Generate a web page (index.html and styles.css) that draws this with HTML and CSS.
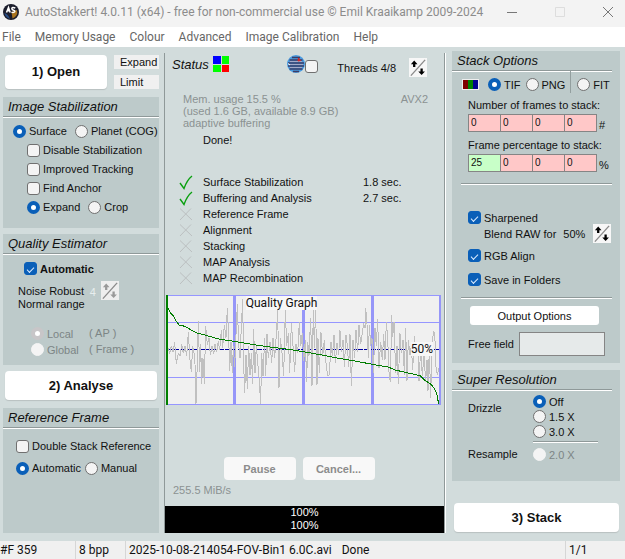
FILE: index.html
```html
<!DOCTYPE html>
<html lang="en">
<head>
<meta charset="utf-8">
<title>AutoStakkert! 4.0.11 (x64)</title>
<link rel="stylesheet" href="styles.css">
</head>
<body>
<svg class="defs" aria-hidden="true">
  <symbol id="updown" viewBox="0 0 18 20">
    <path d="M1.5 18.5L16.5 2" stroke="#8a8a8a" stroke-width="1.4" fill="none"/>
    <path d="M5 2.500L8.500 6.500H6.200V9.500H3.800V6.500H1.500ZM12.800 18L16.300 14.200H14V11H11.600V14.200H9.300Z" fill="currentColor"/>
  </symbol>
  <symbol id="tick" viewBox="0 0 14 15"><path d="M1 8L5 13.500Q8 5 13 1" fill="none" stroke="#0aa010" stroke-width="1.4"/></symbol>
  <symbol id="cross" viewBox="0 0 14 15"><path d="M1 1.500L13 13M12 1.500L1 13" fill="none" stroke="#bcc0c1" stroke-width="1"/></symbol>
</svg>

<header class="titlebar">
  <svg class="app-icon" viewBox="0 0 16 16" aria-hidden="true">
    <circle cx="8" cy="8" r="8" fill="#1b1d2c"/>
    <path d="M8.500 8L14 6Q15.500 12 9.500 14.500Z" fill="#a9741f"/>
    <path d="M1.500 9Q5 10 7 15Q2 13 1.500 9Z" fill="#274d86"/>
    <path d="M3.500 8.500L5.500 3.500L7.200 8.500M4.300 6.800H6.800M12.300 4Q9 2.600 8.800 4.700Q9 6 10.500 6.200Q12.500 6.800 11.500 8Q10 9 8.500 8" fill="none" stroke="#fff" stroke-width="1.500"/>
  </svg>
  <h1 class="title">AutoStakkert! 4.0.11 (x64) - free for non-commercial use © Emil Kraaikamp 2009-2024</h1>
  <div class="window-buttons">
    <button type="button" aria-label="Minimize"><svg viewBox="0 0 10 10"><path d="M0 5.500H10"/></svg></button>
    <button type="button" aria-label="Maximize" disabled><svg viewBox="0 0 10 10"><path d="M.5 .5H9.500V9.500H.5Z"/></svg></button>
    <button type="button" aria-label="Close"><svg viewBox="0 0 10 10"><path d="M0 0L10 10M10 0L0 10"/></svg></button>
  </div>
</header>

<nav class="menu">
  <a href="#">File</a><a href="#">Memory Usage</a><a href="#">Colour</a><a href="#">Advanced</a><a href="#">Image Calibration</a><a href="#">Help</a>
</nav>

<main class="main">
  <div class="side left">
    <div class="open-row">
      <button class="big" type="button">1) Open</button>
      <div class="mini-stack">
        <button class="mini" type="button">Expand</button>
        <button class="mini" type="button">Limit</button>
      </div>
    </div>

    <section class="group stabilization">
      <h2>Image Stabilization</h2>
      <div class="rows">
        <div class="row">
          <label><input type="radio" name="target" checked>Surface</label>
          <label><input type="radio" name="target">Planet (COG)</label>
        </div>
        <div class="row inset"><label><input type="checkbox">Disable Stabilization</label></div>
        <div class="row inset"><label><input type="checkbox">Improved Tracking</label></div>
        <div class="row inset"><label><input type="checkbox">Find Anchor</label></div>
        <div class="row inset">
          <label><input type="radio" name="area" checked>Expand</label>
          <label><input type="radio" name="area">Crop</label>
        </div>
      </div>
    </section>

    <section class="group quality">
      <h2>Quality Estimator</h2>
      <label class="auto"><input type="checkbox" checked>Automatic</label>
      <div class="noise">
        <p>Noise Robust<br>Normal range</p>
        <span class="faint">4</span>
        <button class="spin" type="button" aria-label="Noise level" disabled><svg><use href="#updown"/></svg></button>
      </div>
      <div class="scope">
        <label class="off"><input type="radio" name="scope" checked disabled>Local</label><span>( AP )</span>
        <label class="off"><input type="radio" name="scope" disabled>Global</label><span>( Frame )</span>
      </div>
    </section>

    <button class="big analyse" type="button">2) Analyse</button>

    <section class="group reference">
      <h2>Reference Frame</h2>
      <div class="rows">
        <div class="row"><label><input type="checkbox">Double Stack Reference</label></div>
        <div class="row tight">
          <label><input type="radio" name="ref" checked>Automatic</label>
          <label><input type="radio" name="ref">Manual</label>
        </div>
      </div>
    </section>
  </div>

  <section class="center">
    <div class="status-head">
      <h2>Status</h2>
      <svg class="bayer" viewBox="0 0 16 16" aria-hidden="true"><path fill="#00f" d="M0 0H8V8H0Z"/><path fill="#0f0" d="M9 0H16V8H9ZM0 9H8V16H0Z"/><path fill="#f00" d="M9 9H16V16H9Z"/></svg>
      <div class="planet">
        <svg viewBox="0 0 18 18" aria-hidden="true">
          <circle cx="9" cy="9" r="9" fill="#4a9be0"/>
          <path d="M5 2.500H13M2.500 5H15.500M1 8H17M1 11H17M2.500 14H15.500M6 16.500H12" stroke="#3b3c66" stroke-width="1.500"/>
          <path d="M3 6.500H15M2 9.500H16M3 12.500H15" stroke="#a3a9c8" stroke-width="1"/>
          <path d="M11.500 3L13.500 5.500L11 6Z" fill="#d22" stroke="#d22"/><path d="M1 8.500L3 10" stroke="#fff"/>
        </svg>
        <input type="checkbox" aria-label="Planet view">
      </div>
      <span class="threads">Threads 4/8</span>
      <button class="spin" type="button" aria-label="Thread count"><svg><use href="#updown"/></svg></button>
    </div>
    <div class="memory">
      <p>Mem. usage 15.5 %<br>(used 1.6 GB, available 8.9 GB)<br>adaptive buffering</p>
      <span>AVX2</span>
    </div>
    <p class="done">Done!</p>
    <ul class="steps">
      <li><svg><use href="#tick"/></svg><span>Surface Stabilization</span><span>1.8 sec.</span></li>
      <li><svg><use href="#tick"/></svg><span>Buffering and Analysis</span><span>2.7 sec.</span></li>
      <li><svg><use href="#cross"/></svg><span>Reference Frame</span></li>
      <li><svg><use href="#cross"/></svg><span>Alignment</span></li>
      <li><svg><use href="#cross"/></svg><span>Stacking</span></li>
      <li><svg><use href="#cross"/></svg><span>MAP Analysis</span></li>
      <li><svg><use href="#cross"/></svg><span>MAP Recombination</span></li>
    </ul>
    <figure class="graph">
      <svg viewBox="18 30 825 330" shape-rendering="crispEdges" role="img" aria-label="Quality graph">
        <path fill="#f0f0f0" d="M18 30H843V360H18Z"/>
        <path stroke="#9696ff" stroke-width="3" d="M18 31.500H843M18 112.500H843M18 277.500H843M18 358.500H843"/>
        <path stroke="#9696f8" stroke-width="9" d="M223.500 30V360M430.500 30V360M637.500 30V360"/><path stroke="#9696f8" stroke-width="6" d="M840 30V360"/>
        <path stroke="#0000a0" stroke-width="3" stroke-dasharray="15 4" d="M24 193.500H837"/>
        <polyline fill="none" stroke="#c0c0c0" stroke-width="3" points="24,190 29,205 34,182 39,200 44,172 49,236 55,205 60,214 65,178 70,205 75,184 80,212 85,142 90,225 94,262 98,184 102,205 105,238 108,357 111,262 115,108 119,260 122,178 125,296 129,220 133,296 137,124 142,180 147,160 151,210 156,184 161,208 165,178 170,202 175,168 179,196 184,134 188,190 193,120 198,158 202,70 206,150 209,258 213,170 217,265 220,184 224,245 228,150 232,58 236,180 240,220 244,125 248,42 251,235 254,325 258,210 262,312 266,182 270,270 274,205 278,296 281,132 285,265 289,180 293,232 297,275 302,357 305,205 309,274 314,160 317,272 321,146 325,220 330,170 335,235 339,160 344,220 349,150 353,74 357,308 361,160 366,205 371,272 376,74 380,182 385,145 389,265 394,115 399,182 404,262 408,178 413,204 418,112 422,184 427,144 431,228 436,165 440,290 443,170 447,212 452,98 456,302 460,74 463,188 467,68 471,300 474,160 478,265 483,142 488,212 493,166 498,235 503,272 508,270 513,172 517,214 522,150 526,235 531,174 536,210 540,136 544,202 549,164 553,246 558,150 562,182 566,245 570,148 574,302 579,165 584,220 588,135 593,200 597,120 602,178 606,150 611,115 615,130 617,70 621,118 625,220 628,120 632,182 636,160 640,265 645,130 649,182 653,102 657,250 662,170 667,225 671,148 675,225 679,112 683,160 687,260 691,292 695,90 698,156 702,110 707,265 711,182 715,298 720,145 724,205 729,165 733,270 737,130 741,288 745,164 750,210 754,184 758,255 763,154 768,205 773,184 777,288 782,192 787,272 792,210 797,290 801,225 804,318 808,190 812,340 815,210 820,140 824,142 828,245 832,270 837,250"/>
        <polyline fill="none" stroke="#007d00" stroke-width="3" points="22,65 32,84 40,92 48,108 57,120 75,124 92,134 112,144 145,153 180,163 222,169 275,178 330,186 385,193 430,200 480,209 530,219 580,227 637,238 685,246 705,255 745,264 780,272 795,286 812,297 824,312 830,325 836,357"/>
        <path stroke="#008000" stroke-width="6" d="M21 30V360"/>
      </svg>
      <figcaption>Quality Graph</figcaption>
      <span class="percent">50%</span>
    </figure>
    <div class="controls">
      <button type="button" disabled>Pause</button>
      <button type="button" disabled>Cancel...</button>
    </div>
    <p class="speed">255.5 MiB/s</p>
    <div class="progress"><span>100%</span><span>100%</span></div>
  </section>

  <div class="side right">
    <section class="group stack">
      <h2>Stack Options</h2>
      <div class="formats">
        <svg class="rgb" viewBox="0 0 17 11" aria-hidden="true"><path fill="#eee" d="M0 0H17V11H0Z"/><path fill="#800000" d="M1 1H6V10H1Z"/><path fill="#008000" d="M6 1H11V10H6Z"/><path fill="#000090" d="M11 1H16V10H11Z"/></svg>
        <label><input type="radio" name="format" checked>TIF</label>
        <label><input type="radio" name="format">PNG</label>
        <label class="fit"><input type="radio" name="format">FIT</label>
      </div>
      <fieldset class="amount">
        <legend>Number of frames to stack:</legend>
        <div class="cells">
          <input type="text" value="0" aria-label="Frames 1"><input type="text" value="0" aria-label="Frames 2"><input type="text" value="0" aria-label="Frames 3"><input type="text" value="0" aria-label="Frames 4"><span>#</span>
        </div>
      </fieldset>
      <fieldset class="amount">
        <legend>Frame percentage to stack:</legend>
        <div class="cells">
          <input class="active" type="text" value="25" aria-label="Percentage 1"><input type="text" value="0" aria-label="Percentage 2"><input type="text" value="0" aria-label="Percentage 3"><input type="text" value="0" aria-label="Percentage 4"><span>%</span>
        </div>
      </fieldset>
      <hr>
      <div class="options">
        <label><input type="checkbox" checked>Sharpened</label>
        <div class="blend"><span>Blend RAW for</span><span>50%</span>
          <button class="spin" type="button" aria-label="Blend amount"><svg><use href="#updown"/></svg></button>
        </div>
        <label class="rgb-align"><input type="checkbox" checked>RGB Align</label>
        <label><input type="checkbox" checked>Save in Folders</label>
      </div>
      <hr>
      <button class="output" type="button">Output Options</button>
      <div class="free"><label for="free">Free field</label><input id="free" type="text"></div>
    </section>

    <section class="group super">
      <h2>Super Resolution</h2>
      <div class="drizzle">
        <span class="name">Drizzle</span>
        <div class="choices">
          <label><input type="radio" name="drizzle" checked>Off</label>
          <label><input type="radio" name="drizzle">1.5 X</label>
          <label><input type="radio" name="drizzle">3.0 X</label>
        </div>
        <hr>
        <span>Resample</span>
        <label class="off"><input type="radio" name="resample" disabled>2.0 X</label>
      </div>
    </section>

    <button class="big stack-button" type="button">3) Stack</button>
  </div>
</main>

<footer class="statusbar">
  <span class="frames">#F 359</span><span class="depth">8 bpp</span>
  <span class="file"><span>2025-10-08-214054-FOV-Bin1 6.0C.avi</span><span>Done</span></span>
  <span class="page">1/1</span>
</footer>
</body>
</html>
```

FILE: styles.css
```css
* { box-sizing: border-box; }

body {
  margin: 0;
  min-height: 100vh;
  display: flex;
  flex-direction: column;
  background: #d2dcdc;
  color: #111;
  font: 11px/12px "Liberation Sans", Arial, sans-serif;
}

.defs { position: absolute; width: 0; height: 0; }
h1, h2, p, ul, figure, fieldset { margin: 0; padding: 0; }
button, input { font: inherit; color: inherit; margin: 0; padding: 0; }
button { border: 0; }
svg { display: block; }

/* Title bar and menu */
.titlebar {
  display: flex;
  align-items: center;
  height: 27px;
  padding: 0 12px 4px 3px;
  background: #f3f3f3;
  color: #8c8c8c;
}
.app-icon { width: 16px; height: 16px; flex: none; }
.title {
  flex: 1;
  margin-left: 6px;
  font: 12px/16px Roboto, sans-serif;
  white-space: nowrap;
}
.window-buttons { display: flex; gap: 38px; }
.window-buttons button { width: 10px; height: 10px; background: none; }
.window-buttons svg { width: 10px; height: 10px; fill: none; stroke: #777; }
.window-buttons button:disabled svg { stroke: #ddd; }
.menu {
  display: flex;
  gap: 14px;
  height: 20px;
  padding-left: 2px;
  background: #fff;
  font: 12px/20px Roboto, sans-serif;
}
.menu a { color: #666; text-decoration: none; white-space: nowrap; }

/* Shared parts */
.main {
  flex: 1;
  display: grid;
  grid-template-columns: 156px minmax(0, 1fr) 168px;
  padding: 4px 5px 8px 3px;
}
.side { display: flex; flex-direction: column; }
.group { background: #bdcaca; }
h2 { font: italic 13px/19px "Liberation Sans", Arial, sans-serif; }
.group h2 {
  padding-left: 5px;
  border-bottom: 1px solid #8f9999;
  box-shadow: 0 1px #fff;
}
label { display: flex; align-items: center; gap: 3px; white-space: nowrap; }
input[type="radio"], input[type="checkbox"] {
  appearance: none;
  flex: none;
  width: 13px;
  height: 13px;
  border: 1px solid #707070;
  border-radius: 3px;
  background: #f4f4f4;
}
input[type="radio"] { border-radius: 50%; }
input[type="radio"]:checked { border: 4px solid #0a5fb8; background: #fff; }
input[type="checkbox"]:checked {
  border-color: #0a5fb8;
  background: #0a5fb8;
  display: grid;
  place-items: center;
}
input[type="checkbox"]:checked::before {
  content: "";
  width: 6px;
  height: 3px;
  border: solid #dcecff;
  border-width: 0 0 1px 1px;
  rotate: -45deg;
}
input[type="radio"]:disabled { border-color: #f4f4f4; }
input[type="radio"]:checked:disabled { border-color: #c8c6c8; }
.off { color: #7c8585; }
.big {
  border-radius: 4px;
  background: #fff;
  box-shadow: 0 1px 1px #b8c0c0;
  font-weight: bold;
  font-size: 13px;
}
.spin { flex: none; width: 18px; height: 19px; background: #f7f7f7; color: #000; }
.spin svg { width: 18px; height: 19px; }
.spin:disabled { color: #999; background: #eee; }
hr { height: 2px; margin: 0; border: solid; border-width: 1px 0; border-color: #8f9999 #fff #fff; }
.row { display: flex; gap: 8px; height: 16px; }

/* Left column */
.open-row { display: flex; justify-content: space-between; padding: 4px 0 0 2px; }
.open-row .big { width: 102px; height: 34px; }
.mini-stack { display: grid; gap: 6px; }
.mini { width: 45px; height: 14px; padding-left: 6px; background: #f0f0f0; text-align: left; white-space: nowrap; }
.stabilization { margin-top: 8px; height: 131px; }
.rows { display: grid; gap: 3px; padding: 6px 0 0 10px; }
.inset { padding-left: 14px; }
.quality { margin-top: 6px; height: 131px; }
.auto { padding: 8px 0 0 21px; font-weight: bold; }
.noise { display: flex; gap: 5px; padding: 6px 0 0 15px; }
.noise p { line-height: 13px; padding-top: 4px; white-space: nowrap; }
.faint { padding-top: 5px; color: #e8eeee; }
.scope {
  display: grid;
  grid-template-columns: 58px 1fr;
  row-gap: 3px;
  padding: 16px 0 0 28px;
  color: #7c8585;
}
.analyse { margin: 6px 2px 0; height: 29px; }
.reference { flex: 1; margin-top: 8px; }
.reference .rows { align-content: start; padding: 10px 0 0 13px; gap: 6px; }
.reference .tight { gap: 4px; }

/* Center column */
.center {
  display: flex;
  flex-direction: column;
  margin: 2px 7px 0 5px;
  border: solid #8f9999;
  border-width: 0 1px;
  box-shadow: 1px 0 #fff;
}
.status-head { display: flex; align-items: flex-start; padding: 2px 17px 0 7px; }
.status-head .bayer { width: 16px; height: 16px; margin: 1px 0 0 4px; }
.planet { display: flex; align-items: flex-end; margin-left: auto; }
.planet svg { width: 18px; height: 18px; }
.threads { margin: 7px 13px 0 19px; }
.status-head .spin { margin-top: 3px; }
.memory {
  display: flex;
  justify-content: space-between;
  padding: 16px 16px 0 18px;
  color: #8b9292;
}
.done { padding: 5px 0 0 38px; }
.steps { padding: 28px 0 0 14px; list-style: none; }
.steps li { display: grid; grid-template-columns: 24px 160px 1fr; align-items: center; height: 16px; }
.steps svg { width: 14px; height: 15px; }
.graph {
  position: relative;
  margin: 9px 3px 0 1px;
  font: 12px/14px Roboto, sans-serif;
}
.graph svg { width: 100%; }
.graph figcaption, .percent { position: absolute; background: #f7f7f7; white-space: nowrap; }
.graph figcaption { left: 29%; top: 1px; }
.percent { right: 8px; top: 47px; }
.controls { display: flex; justify-content: center; gap: 7px; margin-top: auto; padding-right: 11px; }
.controls button {
  width: 72px;
  height: 23px;
  border-radius: 4px;
  background: #f8f8f8;
  color: #8c8c8c;
  font-weight: bold;
}
.speed { padding: 4px 0 10px 8px; color: #8b9292; }
.progress { display: grid; padding-bottom: 1px; background: #000; color: #fff; text-align: center; line-height: 13px; }

/* Right column */
.right .group h2, .stack hr { margin-right: 8px; }
.stack { height: 312px; }
.formats { display: flex; align-items: center; height: 22px; padding: 5px 0 0 10px; }
.rgb { width: 17px; height: 11px; margin-right: 9px; }
.formats label + label { margin-left: 5px; }
.formats .fit { height: 22px; margin-top: -5px; padding: 5px 0 0 6px; border-left: 1px solid #939f9f; }
.amount { border: 0; padding-left: 16px; margin-top: 6px; min-width: 0; }
.amount + .amount { margin-top: 7px; }
.amount legend { padding: 0; white-space: nowrap; }
.cells { display: flex; margin-top: 3px; }
.cells input {
  width: 33px;
  height: 18px;
  margin-right: -1px;
  padding: 0 0 2px 2px;
  border: 1px solid #858585;
  border-radius: 0;
  background: #ffc8c8;
  font-size: 10px;
}
.cells .active { background: #c8ffc8; }
.cells span { padding: 5px 0 0 3px; }
.stack hr { margin: 11px 8px 0 9px; }
.options { padding: 26px 0 0 16px; }
.blend { display: flex; align-items: center; gap: 7px; padding: 0 9px 0 16px; white-space: nowrap; }
.blend .spin { margin-left: auto; }
.rgb-align { margin: 6px 0 11px; }
.output { display: block; width: 129px; height: 19px; margin: 7px 0 0 18px; border-radius: 3px; background: #fff; }
.free { display: flex; align-items: center; justify-content: space-between; padding: 7px 15px 0 16px; }
.free input { width: 86px; height: 24px; border: 1px solid #858585; background: #e6eaea; }
.super { margin-top: 7px; height: 111px; }
.drizzle {
  display: grid;
  grid-template-columns: 65px 65px;
  padding: 5px 0 0 16px;
}
.drizzle .name { padding-top: 7px; }
.choices { display: grid; gap: 2px; }
.drizzle hr { grid-column: 2; margin: 3px 0 5px; }
.stack-button { margin: auto 1px 1px 2px; height: 29px; }

/* Status bar */
.statusbar {
  display: flex;
  height: 18px;
  background: #f0f0f0;
  font: 12px/18px Roboto, sans-serif;
  white-space: nowrap;
  overflow: hidden;
}
.statusbar > span + span { padding-left: 3px; border-left: 1px solid #d6d6d6; }
.frames { width: 75px; }
.depth { width: 50px; }
.file { flex: 1; display: flex; gap: 10px; }
.page { width: 60px; }
```
